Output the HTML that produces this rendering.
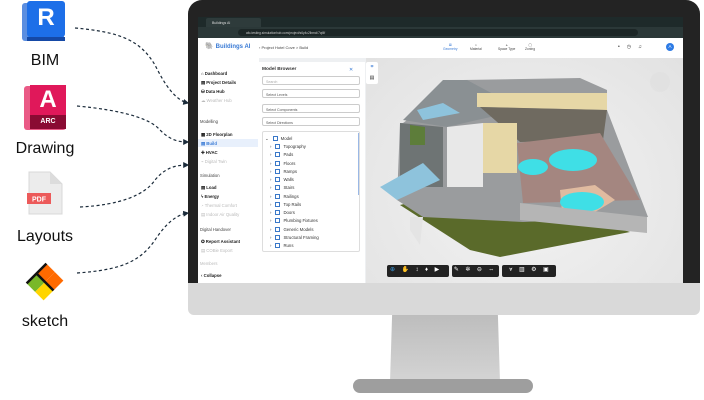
<!DOCTYPE html>
<html><head><style>
*{margin:0;padding:0;box-sizing:border-box}
body{width:704px;height:400px;background:#fff;position:relative;overflow:hidden;font-family:"Liberation Sans",sans-serif}
.a{position:absolute}
.lbl{position:absolute;font-size:16px;color:#111;width:90px;text-align:center}
.sb{position:absolute;left:3px;font-size:4.3px;color:#222;font-weight:bold;white-space:nowrap}
.sb.g{color:#bbb;font-weight:normal}
.sec{position:absolute;left:2px;font-size:4.2px;color:#444;white-space:nowrap}
.tr{position:absolute;left:270px;font-size:4.3px;color:#333;white-space:nowrap}
.tr i{display:inline-block;width:5px;height:5px;border:0.8px solid #3a78c8;margin:0 3px 0 4px;vertical-align:-1px}
.dd{position:absolute;left:262px;width:98px;height:9px;border:0.6px solid #ccc;border-radius:2px;font-size:3.6px;color:#555;padding:2.5px 3px;background:#fff}
.tb{position:absolute;top:265px;height:12px;background:#222;border-radius:2px}
</style></head><body>
<svg class="a" style="left:0;top:0" width="200" height="300">
<defs><marker id="m" markerWidth="5" markerHeight="5" refX="4" refY="2.5" orient="auto"><path d="M0,0L5,2.5L0,5z" fill="#1b2b3a"/></marker></defs>
<g fill="none" stroke="#1b2b3a" stroke-width="1.2" stroke-dasharray="3,2.5" marker-end="url(#m)">
<path d="M75,28 C120,32 140,40 155,65 C165,85 175,100 188,103"/>
<path d="M77,106 C120,110 150,118 160,130 C170,140 178,142 188,142"/>
<path d="M80,207 C120,205 145,195 155,180 C165,168 175,165 188,165"/>
<path d="M77,273 C120,270 140,262 155,240 C165,225 175,215 188,213"/>
</g></svg>
<div class="a" style="left:22px;top:3px;width:42px;height:38px;background:#5b8ee0;border-radius:3px"></div>
<div class="a" style="left:27px;top:1px;width:38px;height:36px;background:#1d6fe8;border-radius:3px;color:#fff;font-weight:bold;font-size:24px;text-align:center;line-height:34px">R</div>
<div class="a" style="left:27px;top:37px;width:38px;height:4px;background:#1549a6"></div>
<div class="lbl" style="left:0;top:52px">BIM</div>
<div class="a" style="left:24px;top:86px;width:42px;height:44px;background:#ea5a86;border-radius:3px"></div>
<div class="a" style="left:30px;top:85px;width:36px;height:30px;background:#e0185a;color:#fff;font-weight:bold;font-size:24px;text-align:center;line-height:30px">A</div>
<div class="a" style="left:30px;top:115px;width:36px;height:14px;background:#8a0b33;color:#fff;font-weight:bold;font-size:7px;text-align:center;line-height:14px">ARC</div>
<div class="lbl" style="left:0;top:140px">Drawing</div>
<svg class="a" style="left:26px;top:171px" width="40" height="46"><path d="M3,1H24L36,13V43H3Z" fill="#ececec" stroke="#d8d8d8"/><path d="M24,1V13H36" fill="#dcdcdc"/><rect x="1" y="22" width="24" height="11" fill="#ec5a5a"/><text x="13" y="30.5" font-size="7" fill="#fff" font-weight="bold" text-anchor="middle" font-family="Liberation Sans">PDF</text></svg>
<div class="lbl" style="left:0;top:228px">Layouts</div>
<svg class="a" style="left:25px;top:262px" width="40" height="40"><g transform="rotate(-45 20 20)"><rect x="6" y="8" width="14" height="12" fill="#79b829"/><rect x="20" y="8" width="14" height="12" fill="#ff6a00"/><rect x="6" y="20" width="14" height="12" fill="#ffd500"/><rect x="20" y="20" width="14" height="12" fill="#ff6a00"/><path d="M6,8H34M20,8V32" stroke="#111" stroke-width="2.5" fill="none"/></g></svg>
<div class="lbl" style="left:0;top:313px">sketch</div>

<div class="a" style="left:390px;top:312px;width:110px;height:70px;background:linear-gradient(#bcbcbc,#d4d4d4);clip-path:polygon(2% 0,98% 0,100% 100%,0 100%)"></div>
<div class="a" style="left:353px;top:379px;width:180px;height:14px;background:#9e9e9e;border-radius:7px"></div>
<div class="a" style="left:188px;top:0;width:512px;height:315px;background:#d9d9d9;border-radius:14px 14px 6px 6px"></div>
<div class="a" style="left:188px;top:0;width:512px;height:283px;background:#232323;border-radius:14px 14px 0 0"></div>
<div class="a" style="left:198px;top:17px;width:485px;height:266px;background:#eef0f2;overflow:hidden">
 <div class="a" style="left:0;top:0;width:485px;height:10px;background:#1e2a2a"></div>
 <div class="a" style="left:8px;top:1px;width:55px;height:9px;background:#2e3b3b;border-radius:2px 2px 0 0;font-size:3.5px;color:#ddd;padding:2.5px 6px">Buildings AI</div>
 <div class="a" style="left:0;top:10px;width:485px;height:11px;background:#2b3838"></div>
 <div class="a" style="left:40px;top:12px;width:400px;height:7px;background:#1c2626;border-radius:4px;font-size:3.2px;color:#ccc;padding:1.8px 8px">afo-testing.simulationhub.com/project/s6y4c2lbmcl/7qf4f</div>
 <div class="a" style="left:0;top:21px;width:485px;height:20px;background:#fff"></div>
 <div class="a" style="left:7px;top:25px;font-size:7px;color:#3a7bd5;font-weight:bold">🐘 <span style="font-size:6px">Buildings AI</span></div>
 <div class="a" style="left:61px;top:28px;font-size:4px;color:#444">‹ Project Hotel Cove &gt; Build</div>
 <div class="a" style="left:245px;top:26px;font-size:3.3px;color:#3a7bd5;text-align:center">⊠<br>Geometry</div>
 <div class="a" style="left:272px;top:26px;font-size:3.3px;color:#444;text-align:center">⌂<br>Material</div>
 <div class="a" style="left:300px;top:26px;font-size:3.3px;color:#444;text-align:center">⩓<br>Space Type</div>
 <div class="a" style="left:327px;top:26px;font-size:3.3px;color:#444;text-align:center">▢<br>Zoning</div>
 <div class="a" style="left:468px;top:26px;width:8px;height:8px;background:#2d7be5;border-radius:50%;color:#fff;font-size:4.5px;text-align:center;line-height:8px">A</div>
 <div class="a" style="left:420px;top:27px;font-size:5px;color:#333;letter-spacing:7px">•◷♫</div>
 <div class="a" style="left:0;top:41px;width:61px;height:225px;background:#fff"></div>
 <div class="sb" style="top:54px">⌂ Dashboard</div>
 <div class="sb" style="top:63px">▤ Project Details</div>
 <div class="sb" style="top:72px">⛁ Data Hub</div>
 <div class="sb g" style="top:81px">☁ Weather Hub</div>
 <div class="sec" style="top:102px">Modelling</div>
 <div class="sb" style="top:115px">▦ 2D Floorplan</div>
 <div class="a" style="left:0;top:122px;width:60px;height:8px;background:#e8f0fc"></div>
 <div class="sb" style="top:124px;color:#3a7bd5">▤ Build</div>
 <div class="sb" style="top:133px">✚ HVAC</div>
 <div class="sb g" style="top:142px">⌁ Digital Twin</div>
 <div class="sec" style="top:156px">Simulation</div>
 <div class="sb" style="top:168px">▤ Load</div>
 <div class="sb" style="top:177px">ϟ Energy</div>
 <div class="sb g" style="top:186px">◔ Thermal Comfort</div>
 <div class="sb g" style="top:195px">▤ Indoor Air Quality</div>
 <div class="sec" style="top:210px">Digital Handover</div>
 <div class="sb" style="top:222px">✪ Report Assistant</div>
 <div class="sb g" style="top:231px">▤ COBie Export</div>
 <div class="sec" style="top:244px;color:#bbb">Members</div>
 <div class="sb" style="top:256px">‹ Collapse</div>
 <div class="a" style="left:61px;top:45px;width:106px;height:221px;background:#fff"></div>
</div>
<div class="a" style="left:262px;top:67px;font-size:4.8px;font-weight:bold;color:#333">Model Browser</div>
<div class="a" style="left:349px;top:67px;font-size:5px;color:#3a7bd5">✕</div>
<div class="dd" style="top:76px;color:#aaa">Search</div>
<div class="dd" style="top:89px">Select Levels</div>
<div class="dd" style="top:104px">Select Components</div>
<div class="dd" style="top:117px">Select Directions</div>
<div class="a" style="left:262px;top:131px;width:98px;height:121px;border:0.6px solid #ddd;border-radius:2px;background:#fff"></div>
<div class="a" style="left:358px;top:133px;width:1px;height:62px;background:#9ab8e6"></div>
<div class="tr" style="left:265px;top:136px">⌄<i></i>Model</div>
<div class="tr" style="top:144px">›<i></i>Topography</div>
<div class="tr" style="top:152px">›<i></i>Pads</div>
<div class="tr" style="top:161px">›<i></i>Floors</div>
<div class="tr" style="top:169px">›<i></i>Ramps</div>
<div class="tr" style="top:177px">›<i></i>Walls</div>
<div class="tr" style="top:185px">›<i></i>Stairs</div>
<div class="tr" style="top:194px">›<i></i>Railings</div>
<div class="tr" style="top:202px">›<i></i>Top Rails</div>
<div class="tr" style="top:210px">›<i></i>Doors</div>
<div class="tr" style="top:218px">›<i></i>Plumbing Fixtures</div>
<div class="tr" style="top:227px">›<i></i>Generic Models</div>
<div class="tr" style="top:235px">›<i></i>Structural Framing</div>
<div class="tr" style="top:243px">›<i></i>Runs</div>
<div class="a" style="left:366px;top:58px;width:317px;height:225px;background:radial-gradient(ellipse at 50% 60%,#f3f3f3,#e2e2e2)"></div>
<div class="a" style="left:366px;top:62px;width:12px;height:22px;background:#fff;border-radius:2px;font-size:5px;color:#3a7bd5;text-align:center;line-height:11px">⌗<br><span style="color:#333">▤</span></div>
<svg class="a" style="left:0;top:0" width="704" height="283">
<polygon points="400,205 470,250 500,257 630,232 600,222 420,200" fill="#5a6a2a"/>
<polygon points="403,123 463,80 580,78 607,90 607,110 648,217 523,222 423,217 397,200 400,123" fill="#9a9c9e"/>
<polygon points="403,120 443,80 467,80 523,110 477,120 447,127" fill="#8a9093"/>
<polygon points="417,110 443,103 460,113 423,120" fill="#8ec3dc"/>
<polygon points="477,93 607,93 607,110 477,107" fill="#e6d7a6"/>
<polygon points="480,107 607,110 603,140 520,142" fill="#6f6a60"/>
<polygon points="400,123 443,127 443,187 400,187" fill="#6e7474"/>
<polygon points="410,125 425,127 425,145 410,145" fill="#5d7d3a"/>
<polygon points="447,127 483,123 483,187 447,187" fill="#e8e8e8"/>
<polygon points="483,123 517,123 517,173 483,173" fill="#e6d7a6"/>
<polygon points="517,143 600,133 640,200 523,203" fill="#a48680"/>
<ellipse cx="533" cy="167" rx="15" ry="8" fill="#3fdfe6"/>
<ellipse cx="573" cy="160" rx="24" ry="11" fill="#3fdfe6"/>
<polygon points="560,190 595,185 615,200 590,215 562,212" fill="#e0bba0"/>
<ellipse cx="582" cy="202" rx="22" ry="10" fill="#3fdfe6"/>
<polygon points="380,187 423,163 440,180 397,200" fill="#8ec3dc"/>
<polygon points="520,203 647,217 647,233 520,220" fill="#b5b5b5"/>
<polygon points="410,217 423,217 420,245 410,230" fill="#e4e4e4"/>
<circle cx="660" cy="82" r="10" fill="#e0e0e0" opacity=".7"/>
</svg>
<div class="tb" style="left:387px;width:62px"></div>
<div class="tb" style="left:452px;width:47px"></div>
<div class="tb" style="left:502px;width:54px"></div>
<div class="a" style="left:390px;top:266px;font-size:6px;color:#fff;letter-spacing:6.5px;white-space:nowrap"><span style="color:#3a9be0">⊕</span>✋↕♦▶ ✎✲⊖⇔ ⩔▥⚙▣</div>
</body></html>
